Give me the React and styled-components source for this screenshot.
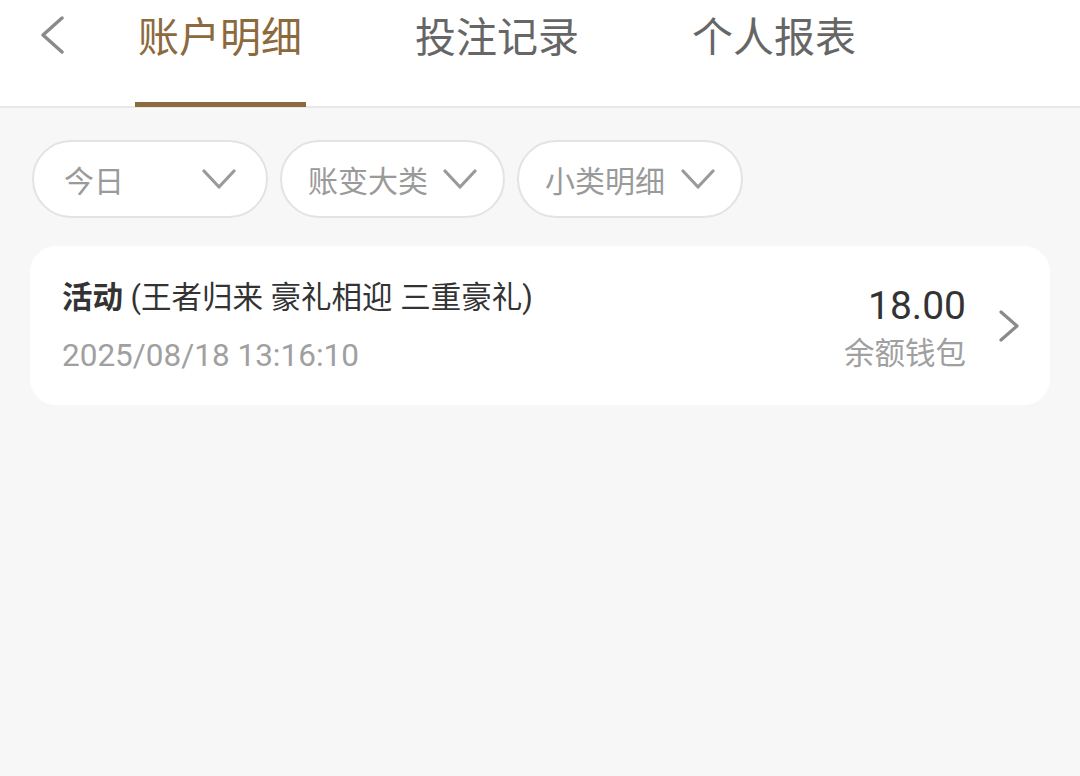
import React from 'react'
import styled, { createGlobalStyle } from 'styled-components'

const GlobalStyle = createGlobalStyle`
   html, body {
      margin: 0;
      padding: 0;
      background: #f7f7f7;
   }
   body {
      font-family: Roboto, 'Noto Sans', 'Noto Sans CJK SC', sans-serif;
      width: 1080px;
      height: 776px;
      overflow: hidden;
   }
`

const tabs = ['账户明细', '投注记录', '个人报表']
const filters = [
   { label: '今日', width: 236, pad: 30 },
   { label: '账变大类', width: 225, pad: 26 },
   { label: '小类明细', width: 226, pad: 26 },
]

const ChevronDown = () => (
   <svg width="34" height="22" viewBox="0 0 34 22" fill="none">
      <path d="M2 3 L17 19 L32 3" stroke="#9a9a9a" strokeWidth="3.2" strokeLinecap="round" strokeLinejoin="round" />
   </svg>
)

export default function App() {
   return (
      <Page>
         <GlobalStyle />
         <Header>
            <BackButton>
               <svg width="26" height="38" viewBox="0 0 26 38" fill="none">
                  <path d="M23 2 L4 19 L23 36" stroke="#8a8a8a" strokeWidth="3.4" strokeLinecap="round" strokeLinejoin="round" />
               </svg>
            </BackButton>
            <Tabs>
               {tabs.map((tab, i) => (
                  <Tab key={tab} active={i === 0}>
                     {tab}
                  </Tab>
               ))}
            </Tabs>
         </Header>
         <Filters>
            {filters.map((f) => (
               <FilterPill key={f.label} w={f.width} pad={f.pad}>
                  <span>{f.label}</span>
                  <ChevronDown />
               </FilterPill>
            ))}
         </Filters>
         <Card>
            <CardInfo>
               <CardTitle>
                  <b>活动</b> (王者归来 豪礼相迎 三重豪礼)
               </CardTitle>
               <CardDate>2025/08/18 13:16:10</CardDate>
            </CardInfo>
            <CardRight>
               <AmountBlock>
                  <Amount>18.00</Amount>
                  <Wallet>余额钱包</Wallet>
               </AmountBlock>
               <svg width="22" height="34" viewBox="0 0 22 34" fill="none">
                  <path d="M3 3 L19 17 L3 31" stroke="#8a8a8a" strokeWidth="3.2" strokeLinecap="round" strokeLinejoin="round" />
               </svg>
            </CardRight>
         </Card>
      </Page>
   )
}

const Page = styled.div`
   width: 1080px;
   min-height: 776px;
   background: #f7f7f7;
`

const Header = styled.div`
   height: 108px;
   background: #fff;
   border-bottom: 2px solid #e8e8e8;
   display: flex;
   align-items: stretch;
   box-sizing: border-box;
`

const BackButton = styled.div`
   width: 135px;
   display: flex;
   align-items: flex-start;
   padding: 16px 0 0 39px;
   box-sizing: border-box;
`

const Tabs = styled.div`
   display: flex;
   gap: 106px;
`

const Tab = styled.div`
   font-size: 41px;
   line-height: 1;
   padding: 18px 4px 0 3px;
   color: ${(p) => (p.active ? '#8c6a3d' : '#666')};
   border-bottom: 5px solid ${(p) => (p.active ? '#8c6a3d' : 'transparent')};
   box-sizing: border-box;
   height: 107px;
   margin-bottom: -1px;
`

const Filters = styled.div`
   display: flex;
   gap: 12px;
   padding: 32px 0 0 32px;
`

const FilterPill = styled.div`
   width: ${(p) => p.w}px;
   height: 78px;
   box-sizing: border-box;
   border: 2px solid #e3e3e3;
   border-radius: 39px;
   background: #fff;
   display: flex;
   align-items: center;
   justify-content: space-between;
   padding: 0 ${(p) => p.pad}px;
   color: #9a9a9a;
   font-size: 30px;
`

const Card = styled.div`
   margin: 28px 30px 0;
   height: 159px;
   background: #fff;
   border-radius: 26px;
   display: flex;
   align-items: center;
   justify-content: space-between;
   padding: 0 30px 0 32px;
   box-sizing: border-box;
`

const CardInfo = styled.div`
   display: flex;
   flex-direction: column;
   gap: 22px;
   margin-top: 2px;
`

const CardTitle = styled.div`
   font-size: 30.5px;
   line-height: 36px;
   color: #333;
   b {
      font-weight: 700;
   }
`

const CardDate = styled.div`
   font-size: 31.5px;
   line-height: 36px;
   color: #a0a0a0;
`

const CardRight = styled.div`
   display: flex;
   align-items: center;
   gap: 32px;
`

const AmountBlock = styled.div`
   display: flex;
   flex-direction: column;
   align-items: flex-end;
   gap: 8px;
   margin-top: 4px;
`

const Amount = styled.div`
   font-size: 39px;
   line-height: 44px;
   color: #333;
`

const Wallet = styled.div`
   font-size: 30.5px;
   line-height: 36px;
   color: #a0a0a0;
`
